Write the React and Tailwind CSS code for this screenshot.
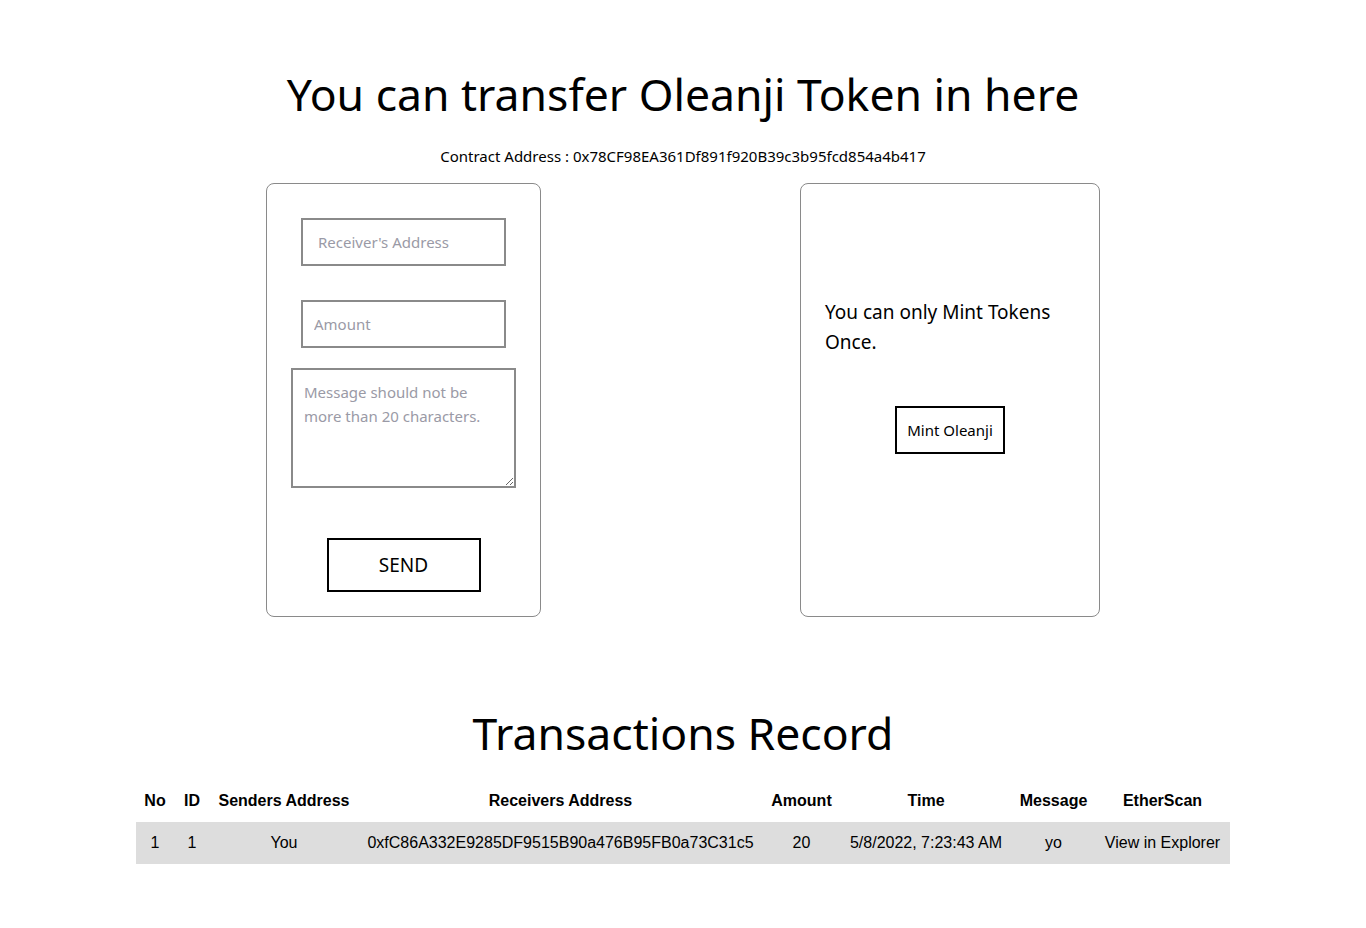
const rows = [
  {
    no: 1,
    id: 1,
    sender: "You",
    receiver: "0xfC86A332E9285DF9515B90a476B95FB0a73C31c5",
    amount: 20,
    time: "5/8/2022, 7:23:43 AM",
    message: "yo",
  },
];

const cols = [
  { label: "No", w: "w-[38px]" },
  { label: "ID", w: "w-[36px]" },
  { label: "Senders Address", w: "w-[148px]" },
  { label: "Receivers Address", w: "w-[405px]" },
  { label: "Amount", w: "w-[77px]" },
  { label: "Time", w: "w-[172px]" },
  { label: "Message", w: "w-[83px]" },
  { label: "EtherScan", w: "w-[135px]" },
];

function TransferCard() {
  return (
    <div className="w-[275px] h-[434px] border border-[#8a8a8a] rounded-[8px] flex flex-col items-center pt-[34px]">
      <input
        placeholder="Receiver's Address"
        className="w-[205px] h-[48px] border-2 border-[#8a8a8a] px-[15px] text-[15px] placeholder:text-[#9a9aa6] outline-none"
      />
      <input
        placeholder="Amount"
        className="mt-[34px] w-[205px] h-[48px] border-2 border-[#8a8a8a] px-[11px] text-[15px] placeholder:text-[#9a9aa6] outline-none"
      />
      <textarea
        placeholder="Message should not be more than 20 characters."
        className="mt-[20px] w-[225px] h-[120px] border-2 border-[#8a8a8a] px-[11px] pt-[10px] text-[15px] leading-[24px] placeholder:text-[#9a9aa6] outline-none"
      />
      <button className="mt-[50px] w-[154px] h-[54px] border-2 border-black text-[19px] text-black">
        SEND
      </button>
    </div>
  );
}

function MintCard() {
  return (
    <div className="w-[300px] h-[434px] border border-[#8a8a8a] rounded-[8px] flex flex-col pt-[113px] px-[24px]">
      <p className="text-[19px] leading-[30px] w-[240px] text-black">
        You can only Mint Tokens Once.
      </p>
      <div className="flex justify-center mt-[49px]">
        <button className="w-[110px] h-[48px] border-2 border-black text-[15px] text-black">
          Mint Oleanji
        </button>
      </div>
    </div>
  );
}

export default function App() {
  return (
    <div
      className="min-h-[928px] bg-white flex flex-col items-center text-black"
      style={{ fontFamily: '"Noto Sans", "Open Sans", sans-serif' }}
    >
      <h1 className="mt-[62px] text-[44.5px] leading-[64px]">
        You can transfer Oleanji Token in here
      </h1>
      <p className="mt-[20px] text-[15px] leading-[20px]">
        Contract Address : 0x78CF98EA361Df891f920B39c3b95fcd854a4b417
      </p>
      <div className="mt-[17px] flex gap-[259px]">
        <TransferCard />
        <MintCard />
      </div>

      <h2 className="mt-[84px] text-[44.5px] leading-[64px]">Transactions Record</h2>

      <table
        className="mt-[15px] border-collapse text-[16px]"
        style={{ fontFamily: '"Liberation Sans", Arial, sans-serif' }}
      >
        <thead>
          <tr className="h-[42px]">
            {cols.map((c) => (
              <th key={c.label} className={`${c.w} font-bold text-center`}>
                {c.label}
              </th>
            ))}
          </tr>
        </thead>
        <tbody>
          {rows.map((r) => (
            <tr key={r.id} className="h-[42px] bg-[#dddddd]">
              <td className="text-center">{r.no}</td>
              <td className="text-center">{r.id}</td>
              <td className="text-center">{r.sender}</td>
              <td className="text-center">{r.receiver}</td>
              <td className="text-center">{r.amount}</td>
              <td className="text-center">{r.time}</td>
              <td className="text-center">{r.message}</td>
              <td className="text-center">View in Explorer</td>
            </tr>
          ))}
        </tbody>
      </table>
    </div>
  );
}
